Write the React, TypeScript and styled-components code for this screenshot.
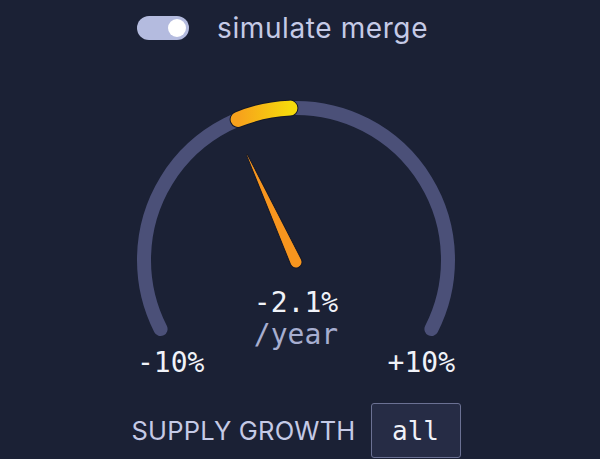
import React from "react";
import styled, { createGlobalStyle } from "styled-components";

const GlobalStyle = createGlobalStyle`
  html, body {
    margin: 0;
    padding: 0;
    background: #1b2135;
    height: 100%;
    overflow: hidden;
  }
`;

const Page = styled.div`
  width: 592px;
  height: 459px;
  display: flex;
  flex-direction: column;
  align-items: center;
  font-family: Inter, "Noto Sans", sans-serif;
`;

const ToggleRow = styled.div`
  align-self: flex-start;
  margin-left: 137px;
  margin-top: 16px;
  display: flex;
  align-items: center;
  gap: 28px;
  height: 24px;
`;

const Track = styled.div<{ $on: boolean }>`
  width: 52px;
  height: 24px;
  border-radius: 12px;
  background: #b4bbdf;
  display: flex;
  align-items: center;
  justify-content: ${(p) => (p.$on ? "flex-end" : "flex-start")};
  padding: 0 3px;
  box-sizing: border-box;
`;

const Knob = styled.div`
  width: 18px;
  height: 18px;
  border-radius: 50%;
  background: #ffffff;
`;

const ToggleLabel = styled.span`
  font-size: 28px;
  color: #c5cae6;
  letter-spacing: 0.6px;
  line-height: 24px;
`;

const GaugeWrap = styled.div`
  position: relative;
  margin-top: 55px;
  width: 332px;
  height: 250px;
`;

const ValueBox = styled.div`
  position: absolute;
  left: 0;
  right: 0;
  top: 192px;
  display: flex;
  flex-direction: column;
  align-items: center;
  font-family: "DejaVu Sans Mono", "Liberation Mono", monospace;
  font-size: 28px;
  line-height: 32px;
`;

const Value = styled.span<{ $muted?: boolean }>`
  color: ${(p) => (p.$muted ? "#a7aed0" : "#f0f2f8")};
`;

const Scale = styled.div`
  width: 318px;
  margin-top: 2px;
  display: flex;
  justify-content: space-between;
  font-family: "DejaVu Sans Mono", "Liberation Mono", monospace;
  font-size: 28px;
  line-height: 32px;
  color: #f0f2f8;
`;

const Footer = styled.div`
  margin-top: 24px;
  display: flex;
  align-items: center;
  gap: 15px;
`;

const FooterLabel = styled.span`
  font-size: 25.5px;
  color: #c5cae6;
  letter-spacing: 0.2px;
`;

const Select = styled.div`
  width: 90px;
  height: 55px;
  box-sizing: border-box;
  border: 1px solid #6b7193;
  border-radius: 3px;
  background: #262c45;
  display: flex;
  align-items: center;
  justify-content: center;
  font-family: "DejaVu Sans Mono", "Liberation Mono", monospace;
  font-size: 26px;
  color: #f0f2f8;
`;

const CX = 166;
const CY = 165;
const R = 152;
const SPAN = 117;

const pt = (deg: number) => {
  const a = (deg * Math.PI) / 180;
  return [CX + R * Math.sin(a), CY - R * Math.cos(a)];
};

const arc = (from: number, to: number) => {
  const [x1, y1] = pt(from);
  const [x2, y2] = pt(to);
  const large = to - from > 180 ? 1 : 0;
  return `M ${x1} ${y1} A ${R} ${R} 0 ${large} 1 ${x2} ${y2}`;
};

const Gauge = ({ value }: { value: number }) => {
  const angle = (value / 10) * SPAN;
  const hl = arc(angle + 2.2, -2.3);
  return (
    <svg width="332" height="250" viewBox="0 0 332 250">
      <defs>
        <linearGradient id="hl" x1="0" x2="1" y1="0" y2="0">
          <stop offset="0" stopColor="#f7a11c" />
          <stop offset="1" stopColor="#f6da0c" />
        </linearGradient>
      </defs>
      <path d={arc(-SPAN, SPAN)} fill="none" stroke="#4b5078" strokeWidth="14" strokeLinecap="round" />
      <path d={hl} fill="none" stroke="#141828" strokeWidth="17" strokeLinecap="round" />
      <path d={hl} fill="none" stroke="url(#hl)" strokeWidth="15" strokeLinecap="round" />
      <g transform={`rotate(${angle} ${CX} ${CY + 2})`}>
        <path
          d={`M ${CX - 0.6} ${CY - 116} L ${CX + 0.6} ${CY - 116} L ${CX + 6} ${CY + 2} A 6 6 0 0 1 ${CX - 6} ${CY + 2} Z`}
          fill="#f7951e"
          stroke="#141828"
          strokeWidth="1"
          strokeLinejoin="round"
        />
      </g>
    </svg>
  );
};

export default function App() {
  const value = -2.1;
  return (
    <>
      <GlobalStyle />
      <Page>
        <ToggleRow>
          <Track $on>
            <Knob />
          </Track>
          <ToggleLabel>simulate merge</ToggleLabel>
        </ToggleRow>
        <GaugeWrap>
          <Gauge value={value} />
          <ValueBox>
            <Value>{value.toFixed(1)}%</Value>
            <Value $muted>/year</Value>
          </ValueBox>
        </GaugeWrap>
        <Scale>
          <span>-10%</span>
          <span>+10%</span>
        </Scale>
        <Footer>
          <FooterLabel>SUPPLY GROWTH</FooterLabel>
          <Select>all</Select>
        </Footer>
      </Page>
    </>
  );
}
